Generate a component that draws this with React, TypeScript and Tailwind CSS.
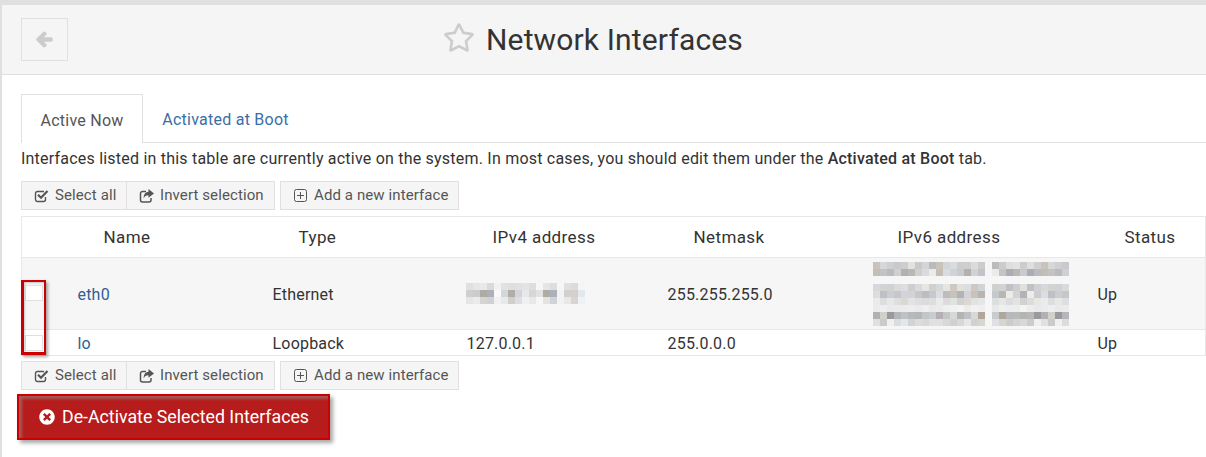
import { FaArrowLeft, FaRegStar, FaTimesCircle } from "react-icons/fa";

const V4_PIXELS = [
  ["#dfe1e0", "#e6e6e6", "#e9e9e9", "#d8dadc", "#f2f1ef", "#e0e3e6", "#dfdfe0", "#e3e1e0", "#e2e4e6", "#dddedd", "#f6f6f6", "#e5e5e3", "#dcdddc", "#f6f6f6", "#dfe0df", "#dcdbd9", "#f3f5f8"],
  ["#cfcfcf", "#cdcccc", "#aeaba6", "#aab1b9", "#f8f8f8", "#d4d6d8", "#b1aeaa", "#d3d5da", "#e6e8ea", "#d6d6d6", "#e4e2e0", "#aeaca3", "#aab2be", "#f3f3f3", "#d2d0ce", "#d5d0cb", "#e0e8f0"],
  ["#e4e5e4", "#ebebea", "#d4d4d2", "#cfd1d4", "#f1f1f2", "#e8e9e9", "#cfcfcc", "#dcdee2", "#f0f0f1", "#e8e8e8", "#f6f6f6", "#e5e3e1", "#cfd2d6", "#f2f2f2", "#e8e8e7", "#d7d4d1", "#eff1f5"],
];

const V6_SHADES = [
  "c9cbcc", "c4c2c0", "d2d3d3", "cfd1d4", "c6c3c6", "eeeeec", "dfe1df", "bfc0c5", "cfd1d2", "d3d6d8", "c5bdb5", "c8cbcf", "d6d8da", "d0d0d2", "c9cacb", "d9dadb", "c7c7c4", "c8c9c7", "b4b4b6", "e0e2e5", "dcdbd7", "d0cdc7", "c7c8cb", "d9dbdf",
];

// mosaic over the ipv6 address, rows sit in the text lines
const V6_ROWS = [
  { y: 0, dark: 0.9 }, { y: 7, dark: 1.35 },
  { y: 22, dark: 0.8 }, { y: 29, dark: 1.25 }, { y: 36, dark: 0.55 }, { y: 43, dark: 0.25 }, { y: 50, dark: 1.4 }, { y: 57, dark: 0.8 },
];

function Mosaic() {
  return (
    <svg width="203" height="64" className="block" shapeRendering="crispEdges">
      {V6_ROWS.map((row, r) =>
        Array.from({ length: 29 }).map((_, c) => {
          const hex = V6_SHADES[(c * c * 3 + c * 7 + r * 11) % V6_SHADES.length];
          const blank = c === 0 || c === 17;
          const ch = (i: number) => {
            const base = parseInt(hex.slice(i, i + 2), 16);
            return blank ? 246 : Math.max(150, Math.min(246, Math.round(246 - (246 - base) * row.dark)));
          };
          return <rect key={`${r}-${c}`} x={c * 7} y={row.y} width="7" height="7" fill={`rgb(${ch(0)},${ch(2)},${ch(4)})`} />;
        })
      )}
    </svg>
  );
}

function CheckIcon() {
  return (
    <svg width="15" height="14" viewBox="0 0 15 14" fill="none" stroke="currentColor" className="shrink-0">
      <path d="M11.5 8v2.5a2 2 0 0 1-2 2h-6a2 2 0 0 1-2-2v-6a2 2 0 0 1 2-2h6.5" strokeWidth="1.4" />
      <path d="M4 5.8l3 3 6.5-6.8" strokeWidth="2.2" />
    </svg>
  );
}

function ShareIcon() {
  return (
    <svg width="15" height="14" viewBox="0 0 15 14" fill="none" className="shrink-0">
      <path d="M7 2.5H3.5a2 2 0 0 0-2 2v6.5a2 2 0 0 0 2 2h6.5a2 2 0 0 0 2-2V9" stroke="currentColor" strokeWidth="1.5" />
      <path d="M9.5 0L15 4.4 9.5 8.8V6.2C7 6.2 5.4 7 4.8 9.6 4.4 6 6 3 9.5 2.7z" fill="currentColor" />
    </svg>
  );
}

function PlusIcon() {
  return (
    <svg width="13" height="13" viewBox="0 0 13 13" fill="none" stroke="currentColor" strokeWidth="1" className="shrink-0">
      <rect x="0.5" y="0.5" width="12" height="12" rx="2" />
      <path d="M6.5 3v7M3 6.5h7" />
    </svg>
  );
}

function ActionRow() {
  return (
    <div className="flex items-stretch gap-[5px] h-[29px] text-[15px] tracking-[0.1px] text-[#555] whitespace-nowrap">
      <div className="flex">
        <button className="flex items-center gap-[6px] pl-[12px] w-[106px] bg-[#f5f5f5] border border-[#e0e0e0]">
          <CheckIcon />
          Select all
        </button>
        <button className="flex items-center gap-[6px] pl-[12px] w-[148px] bg-[#f5f5f5] border border-l-0 border-[#e0e0e0]">
          <ShareIcon />
          Invert selection
        </button>
      </div>
      <button className="flex items-center gap-[7px] pl-[13px] w-[179px] bg-[#f5f5f5] border border-[#e0e0e0]">
        <PlusIcon />
        Add a new interface
      </button>
    </div>
  );
}

const HEADERS = ["Name", "Type", "IPv4 address", "Netmask", "IPv6 address", "Status"];

export default function App() {
  return (
    <div className="w-[1206px] h-[457px] overflow-hidden bg-white border-l-2 border-t-[5px] border-[#e0e0e0] font-['Roboto',sans-serif] text-[#333]">
      {/* Title bar */}
      <div className="h-[70px] bg-[#f5f5f5] border-b border-[#e0e0e0] relative flex items-center justify-center pr-[22px] pb-[2px]">
        <button className="absolute left-[19px] top-[13px] w-[47px] h-[43px] border border-[#e0e0e0] flex items-center justify-center">
          <FaArrowLeft className="w-[17px] h-[17px] text-[#cccccc]" stroke="#cccccc" strokeWidth="50" />
        </button>
        <FaRegStar className="w-[32px] h-[31px] text-[#cdcdcd] mr-[11px] mb-[2px]" />
        <h1 className="text-[30px] leading-none pt-[2px] tracking-[0.15px] text-[#333]">Network Interfaces</h1>
      </div>

      <div className="pl-[19px] pt-[19px] relative">
        {/* Tabs */}
        <div className="flex h-[49px] border-b border-[#e0e0e0] text-[16px] tracking-[0.25px]">
          <div className="w-[122px] h-[49px] bg-white border border-b-0 border-[#e0e0e0] flex items-center justify-center pt-[3px] text-[#555]">Active Now</div>
          <div className="w-[165px] flex items-center justify-center pt-[4px] text-[#3b6ea5]">Activated at Boot</div>
        </div>

        <p className="text-[16px] tracking-[0.215px] leading-[32px] h-[30px] whitespace-nowrap">
          Interfaces listed in this table are currently active on the system. In most cases, you should edit them under the <b className="font-medium">Activated at Boot</b> tab.
        </p>

        <div className="mt-[8px] mb-[6px]">
          <ActionRow />
        </div>

        {/* Table */}
        <table className="w-[1184px] table-fixed border-collapse text-[16px] leading-[22px] tracking-[0.2px] border border-[#e8e8e8]">
          <colgroup>
            <col className="w-[50px]" />
            <col className="w-[195px]" />
            <col className="w-[194px]" />
            <col className="w-[201px]" />
            <col className="w-[204px]" />
            <col className="w-[227px]" />
            <col className="w-[113px]" />
          </colgroup>
          <thead>
            <tr className="h-[41px]">
              <th className="border-b border-[#e8e8e8]" />
              {HEADERS.map((h) => (
                <th key={h} className="pl-[32px] text-left text-[17px] tracking-[0.4px] font-normal border-b border-[#e8e8e8]">{h}</th>
              ))}
            </tr>
          </thead>
          <tbody>
            <tr className="h-[72px] bg-[#f6f6f6] border-b border-[#e8e8e8]">
              <td className="align-middle">
                <span className="block w-[18px] h-[16px] ml-[3px] mb-[2px] bg-white border border-[#e0e0e0]" />
              </td>
              <td className="pl-[6px] pt-[2px] text-[#2f5f93]">eth0</td>
              <td className="pl-[6px] pt-[2px]">Ethernet</td>
              <td className="pl-[5px]">
                <div className="flex flex-col w-[119px]">
                  {V4_PIXELS.map((row, i) => (
                    <div key={i} className="flex h-[7px]">
                      {row.map((c, j) => (
                        <span key={j} className="w-[7px] h-[7px]" style={{ backgroundColor: c }} />
                      ))}
                    </div>
                  ))}
                </div>
              </td>
              <td className="pl-[6px] pt-[2px]">255.255.255.0</td>
              <td><Mosaic /></td>
              <td className="pl-[5px] pt-[2px]">Up</td>
            </tr>
            <tr className="h-[26px]">
              <td>
                <span className="block w-[18px] h-[16px] ml-[3px] bg-white border border-[#e0e0e0]" />
              </td>
              <td className="pl-[6px] pt-[3px] text-[#2f5f93]">lo</td>
              <td className="pl-[6px] pt-[3px]">Loopback</td>
              <td className="pl-[6px] pt-[3px]">127.0.0.1</td>
              <td className="pl-[6px] pt-[3px]">255.0.0.0</td>
              <td />
              <td className="pl-[5px] pt-[3px]">Up</td>
            </tr>
          </tbody>
        </table>

        <div className="mt-[5px]">
          <ActionRow />
        </div>

        <button className="ml-[-4px] mt-[4px] w-[313px] h-[46px] flex items-center gap-[7px] pl-[20px] bg-[#b71c1c] border-[2px] border-[#cc0000] shadow-[3px_3px_4px_rgba(0,0,0,0.35),inset_3px_3px_3px_rgba(150,150,150,0.5)] text-white text-[17.75px]">
          <FaTimesCircle className="w-[16px] h-[16px]" />
          De-Activate Selected Interfaces
        </button>

        {/* annotation round the checkboxes */}
        <div className="absolute left-[19px] top-[205px] w-[25px] h-[75px] border-2 border-l-[3px] border-b-[3px] border-[#cc0000] shadow-[2px_2px_3px_rgba(0,0,0,0.35),inset_1px_1px_2px_rgba(0,0,0,0.2)]" />
      </div>
    </div>
  );
}
